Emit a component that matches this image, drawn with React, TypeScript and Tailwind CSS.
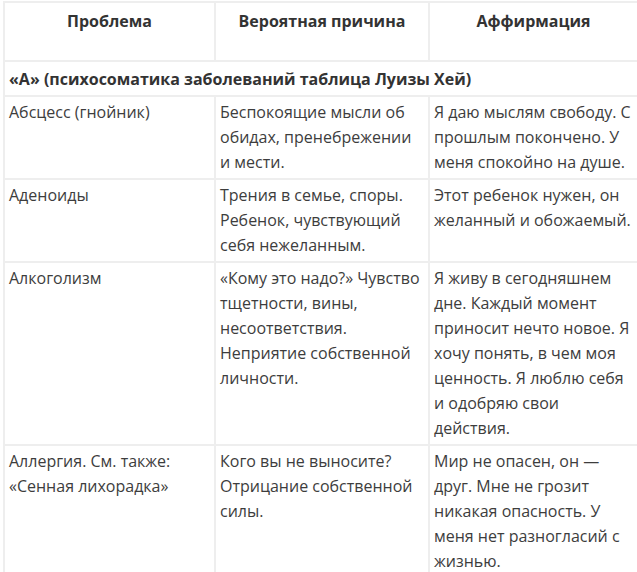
const rows: [string, string, string][] = [
  ['Абсцесс (гнойник)', 'Беспокоящие мысли об обидах, пренебрежении и мести.', 'Я даю мыслям свободу. С прошлым покончено. У меня спокойно на душе.'],
  ['Аденоиды', 'Трения в семье, споры. Ребенок, чувствующий себя нежеланным.', 'Этот ребенок нужен, он желанный и обожаемый.'],
  ['Алкоголизм', '«Кому это надо?» Чувство тщетности, вины, несоответствия. Неприятие собственной личности.', 'Я живу в сегодняшнем дне. Каждый момент приносит нечто новое. Я хочу понять, в чем моя ценность. Я люблю себя и одобряю свои действия.'],
  ['Аллергия. См. также: «Сенная лихорадка»', 'Кого вы не выносите? Отрицание собственной силы.', 'Мир не опасен, он — друг. Мне не грозит никакая опасность. У меня нет разногласий с жизнью.'],
]

export default function App() {
  return (
    <div className="h-[572px] w-[637px] overflow-hidden bg-white pl-[3px] pt-[1px] font-['Open_Sans',sans-serif] text-[16px] leading-[25px] text-[#3d3d3d]">
      <table className="w-[636px] table-fixed border-collapse">
        <colgroup>
          <col className="w-[211px]" />
          <col className="w-[214px]" />
          <col />
        </colgroup>
        <thead>
          <tr className="h-[59px]">
            {['Проблема', 'Вероятная причина', 'Аффирмация'].map((h) => (
              <th key={h} className="border-2 border-[#eee] px-[4px] pb-[26px] pt-[6px] text-center align-top font-bold text-[#333]">
                {h}
              </th>
            ))}
          </tr>
        </thead>
        <tbody>
          <tr>
            <td colSpan={3} className="border-2 border-[#eee] px-[4px] pb-[3px] pt-[5px] font-bold text-[#333]">
              «А» (психосоматика заболеваний таблица Луизы Хей)
            </td>
          </tr>
          {rows.map((r) => (
            <tr key={r[0]}>
              {r.map((c, i) => (
                <td key={i} className="border-2 border-[#eee] pb-[3px] pl-[4px] pr-[3px] pt-[3px] align-top">
                  {c}
                </td>
              ))}
            </tr>
          ))}
        </tbody>
      </table>
    </div>
  )
}
